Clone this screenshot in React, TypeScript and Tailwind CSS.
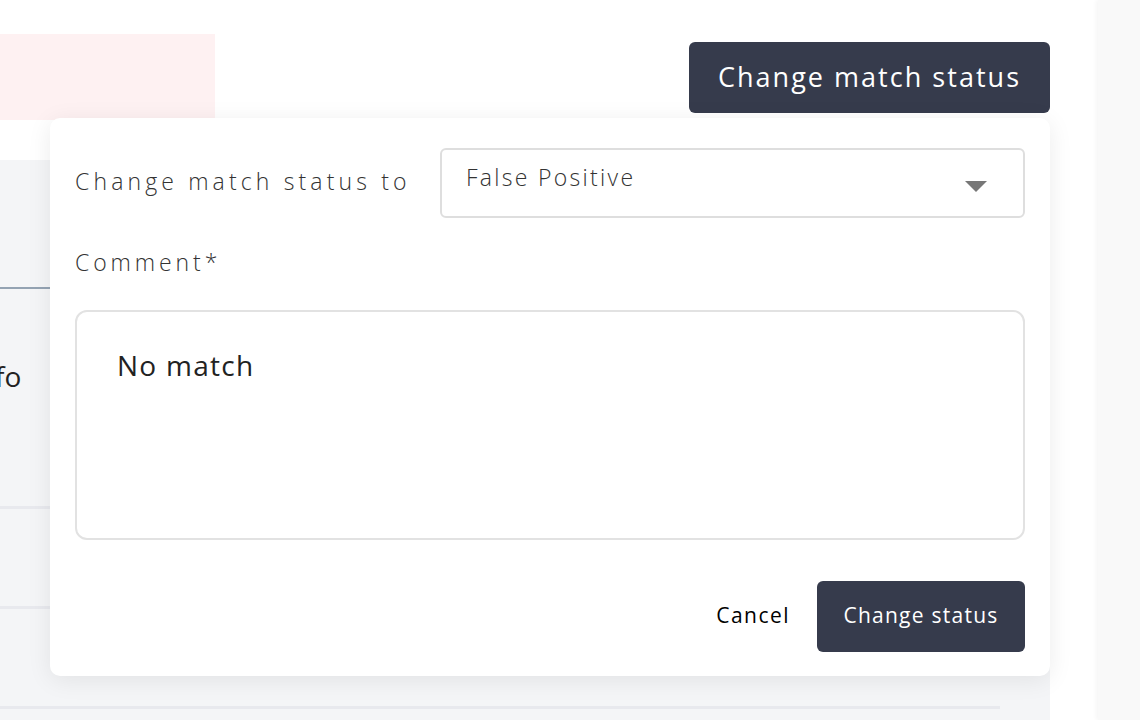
import React from 'react';

const font = {fontFamily: '"Open Sans", Lato, sans-serif'};

const Background = () => (
    <div className="flex-1 flex flex-col">
        <div className="h-[160px] flex flex-col">
            <div className="h-[34px]"/>
            <div className="w-[215px] h-[86px] bg-[#fef1f2]"/>
        </div>
        <div className="flex-1 w-[1050px] bg-[#f4f5f7] flex flex-col">
            <div className="h-[127px]"/>
            <div className="h-[2px] bg-[#94a3b3]"/>
            <div className="h-[217px] flex items-center">
                <span className="text-[28px] text-[#222] -ml-[30px] mb-[44px]">Info</span>
            </div>
            <div className="h-[3px] bg-[#e8e9ee]"/>
            <div className="h-[97px]"/>
            <div className="h-[3px] bg-[#e8e9ee]"/>
            <div className="h-[97px]"/>
            <div className="h-[3px] w-[1000px] bg-[#e8e9ee]"/>
        </div>
    </div>
);

const ChangeStatusPopover = () => (
    <div className="absolute left-[50px] top-[118px] w-[1000px] h-[558px] bg-white rounded-[10px] shadow-[0_4px_24px_rgba(0,0,0,0.08)] px-[25px] pt-[30px]">
        <div className="flex items-center">
            <span className="w-[365px] text-[23px] font-light tracking-[0.18em] text-[#333] mt-[-3px] whitespace-nowrap">Change match status to</span>
            <div className="flex-1 h-[70px] border-2 border-[#dedede] rounded-[6px] flex items-center justify-between pl-[24px] pr-[36px]">
                <span className="text-[23px] font-light tracking-[0.1em] text-[#333] -mt-[12px]">False Positive</span>
                <svg width="22" height="11" viewBox="0 0 22 11" className="mt-[6px]">
                    <path d="M0 0 L22 0 L11 11 Z" fill="#777"/>
                </svg>
            </div>
        </div>
        <div className="mt-[27px] text-[23px] font-light tracking-[0.17em] text-[#333]">Comment*</div>
        <div className="mt-[30px] h-[230px] border-2 border-[#e2e2e2] rounded-[12px] px-[40px] pt-[32px]">
            <span className="text-[28px] font-medium tracking-[0.045em] text-[#222]">No match</span>
        </div>
        <div className="mt-[41px] flex items-center justify-end gap-[27px]">
            <button className="text-[21px] font-medium tracking-[0.07em] text-black">Cancel</button>
            <button className="h-[71px] w-[208px] bg-[#363b4c] rounded-[6px] text-[21px] font-medium tracking-[0.06em] text-white">Change status</button>
        </div>
    </div>
);

export default function App() {
    return (
        <div className="relative w-[1140px] h-[720px] overflow-hidden bg-white flex" style={font}>
            <Background/>
            <div className="w-[42px] bg-[#f9f9f9] shadow-[-2px_0_4px_rgba(0,0,0,0.04)]"/>
            <button className="absolute left-[689px] top-[42px] w-[361px] h-[71px] bg-[#363b4c] rounded-[6px] text-[27px] font-medium tracking-[0.075em] text-white">
                Change match status
            </button>
            <ChangeStatusPopover/>
        </div>
    );
}
